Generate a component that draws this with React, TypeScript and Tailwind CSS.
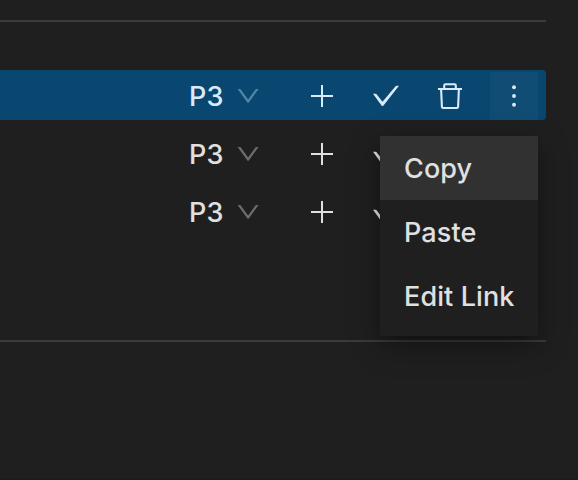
import type { ReactNode } from 'react';

function Icon({ d, width = 1.9, filled = false, className = '' }: { d: string; width?: number; filled?: boolean; className?: string }) {
  return (
    <svg
      viewBox="0 0 32 32"
      className={`block size-8 shrink-0 ${className}`}
      fill={filled ? 'currentColor' : 'none'}
      stroke={filled ? 'none' : 'currentColor'}
      strokeWidth={width}
    >
      <path d={d} />
    </svg>
  );
}

function Action({ children, active = false }: { children?: ReactNode; active?: boolean }) {
  return (
    <button className={`flex h-12 w-12 shrink-0 items-center justify-center ${active ? 'bg-[#104c73]' : ''}`}>
      {children}
    </button>
  );
}

function Row({ selected = false }: { selected?: boolean }) {
  return (
    <div
      className={`flex h-[50px] w-[546px] items-center rounded-r-[4px] pl-[188px] pr-2 pt-[2px] ${
        selected ? 'bg-[#094771] text-[#d9ebf8]' : 'text-[#e0e0e0]'
      }`}
    >
      <span className="w-11 shrink-0 pl-px pt-[2px] text-[27px] font-[450] leading-8 tracking-[0.1px]">P3</span>
      <Icon
        filled
        d="M5.6 9 H8.1 Q8.4 9 8.6 9.3 L16.1 19.4 L23.6 9.3 Q23.8 9 24.1 9 H26.6 L17 22.3 Q16.1 23.4 15.2 22.3 Z"
        className={selected ? 'text-[#5086a5]' : 'text-[#6b6b6b]'}
      />
      <div className="ml-[34px] flex gap-4">
        <Action>
          <Icon d="M5 16 H27 M16 5 V27" width={2} />
        </Action>
        <Action>
          <Icon filled d="M3 13.7 H5.6 Q6.1 13.7 6.4 14.1 L12.5 21.8 L25.6 6.2 Q25.9 5.8 26.4 5.8 H29 L13.5 25.4 Q12.5 26.5 11.5 25.4 Z" />
        </Action>
        {selected && (
          <>
            <Action>
              <Icon d="M4 9 H28 M10.2 9 V5.4 Q10.2 4.2 11.4 4.2 H20.6 Q21.8 4.2 21.8 5.4 V9 M7.1 9 L7.9 26.8 Q8 28 9.2 28 H22.8 Q24 28 24.1 26.8 L24.9 9" width={2.1} />
            </Action>
            <Action active>
              <svg viewBox="0 0 32 32" className="size-8" fill="currentColor">
                <circle cx="16" cy="7.3" r="1.95" />
                <circle cx="16" cy="16" r="1.95" />
                <circle cx="16" cy="24.7" r="1.95" />
              </svg>
            </Action>
          </>
        )}
      </div>
    </div>
  );
}

export default function App() {
  return (
    <div className="relative h-[480px] w-[578px] overflow-hidden border-b border-[#1f191c] bg-[#1f1f1f] pt-5 font-['Inter','Liberation_Sans',sans-serif]">
      <div className="h-[2px] w-[546px] bg-[#3b3b3b]" />
      <div className="mt-12 flex flex-col gap-2">
        <Row selected />
        <Row />
        <Row />
      </div>
      <div className="mt-[104px] h-[2px] w-[546px] bg-[#3b3b3b]" />
      <div className="absolute left-[380px] top-[136px] flex h-[200px] w-[158px] flex-col bg-[#1f1f1f] text-[27px] font-[450] tracking-[0.1px] text-[#e0e0e0] shadow-[0_6px_12px_-8px_rgba(0,0,0,0.48),0_9px_28px_0_rgba(0,0,0,0.35)]">
        <div className="flex h-16 items-center whitespace-nowrap bg-[#313131] pl-6 pt-[2px]">Copy</div>
        <div className="flex h-16 items-center whitespace-nowrap pl-6 pt-[2px]">Paste</div>
        <div className="flex h-16 items-center whitespace-nowrap pl-6 pt-[2px]">Edit Link</div>
      </div>
    </div>
  );
}
